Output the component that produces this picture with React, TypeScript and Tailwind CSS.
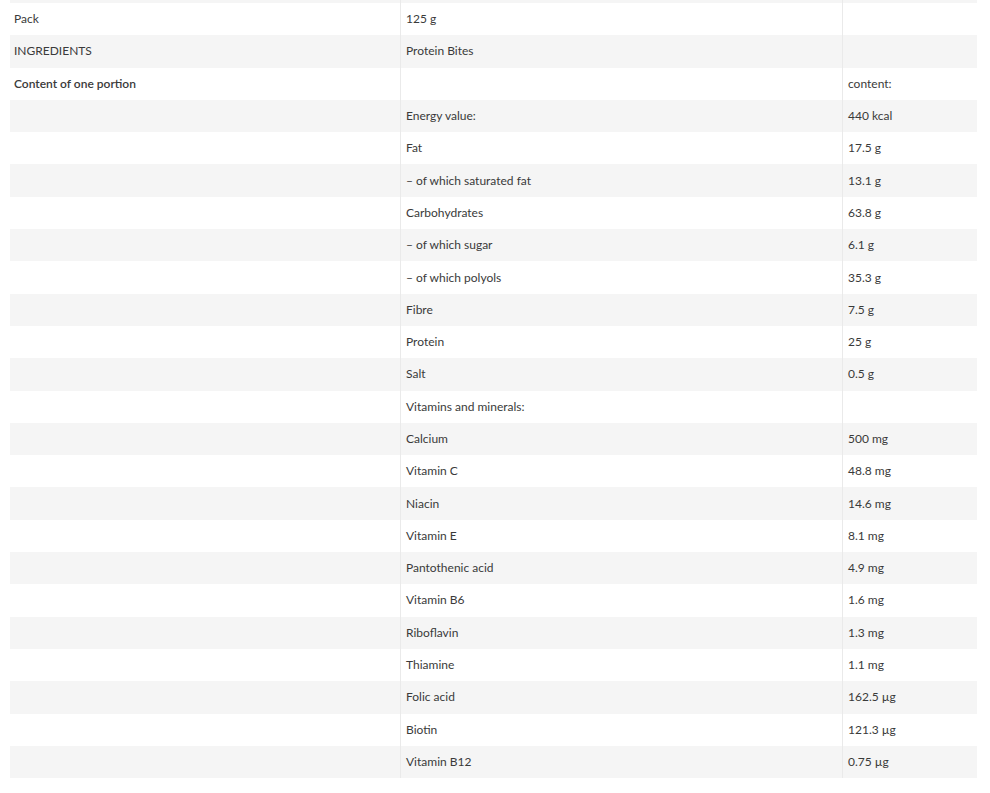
const ROWS: [string, string, string][] = [
  ["Pack", "125 g", ""],
  ["INGREDIENTS", "Protein Bites", ""],
  ["Content of one portion", "", "content:"],
  ["", "Energy value:", "440 kcal"],
  ["", "Fat", "17.5 g"],
  ["", "– of which saturated fat", "13.1 g"],
  ["", "Carbohydrates", "63.8 g"],
  ["", "– of which sugar", "6.1 g"],
  ["", "– of which polyols", "35.3 g"],
  ["", "Fibre", "7.5 g"],
  ["", "Protein", "25 g"],
  ["", "Salt", "0.5 g"],
  ["", "Vitamins and minerals:", ""],
  ["", "Calcium", "500 mg"],
  ["", "Vitamin C", "48.8 mg"],
  ["", "Niacin", "14.6 mg"],
  ["", "Vitamin E", "8.1 mg"],
  ["", "Pantothenic acid", "4.9 mg"],
  ["", "Vitamin B6", "1.6 mg"],
  ["", "Riboflavin", "1.3 mg"],
  ["", "Thiamine", "1.1 mg"],
  ["", "Folic acid", "162.5 µg"],
  ["", "Biotin", "121.3 µg"],
  ["", "Vitamin B12", "0.75 µg"],
];

export default function App() {
  return (
    <div className="h-[793px] w-[990px] overflow-hidden bg-white font-['Lato','Liberation_Sans',sans-serif] text-[12px] text-[#3a3a3a]">
      <div className="ml-[10px] w-[967px]">
        {/* tail of the row above, scrolled off */}
        <div className="grid h-[3px] grid-cols-[390px_442px_135px] bg-[#f5f5f5]">
          <div />
          <div className="border-l border-[#eaeaea]" />
          <div className="border-l border-[#eaeaea]" />
        </div>
        {ROWS.map(([a, b, c], i) => (
          <div
            key={i}
            className={
              "grid h-[32.3px] grid-cols-[390px_442px_135px] " + (i % 2 === 1 ? "bg-[#f5f5f5]" : "bg-white")
            }
          >
            <div className={"flex items-center pl-[4px] " + (i === 2 ? "font-semibold" : "")}>{a}</div>
            <div className="flex items-center border-l border-[#eaeaea] pl-[5px]">{b}</div>
            <div className="flex items-center border-l border-[#eaeaea] pl-[5px]">{c}</div>
          </div>
        ))}
      </div>
    </div>
  );
}
